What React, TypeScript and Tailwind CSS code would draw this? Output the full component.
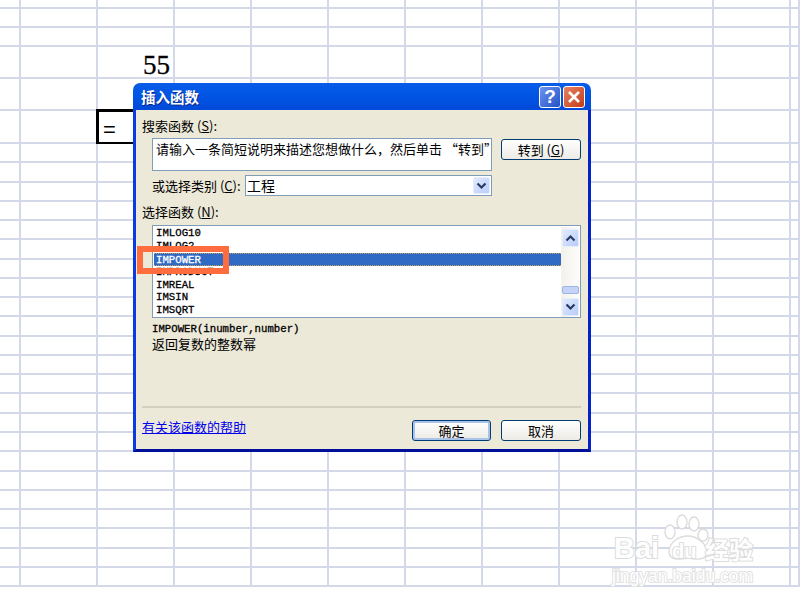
import React from "react";

const sans = "font-['Noto_Sans_CJK_SC','Liberation_Sans',sans-serif]";
const mono = "font-['Liberation_Mono','Noto_Sans_CJK_SC',monospace]";

function Sheet() {
  const rows = Array.from({ length: 29 });
  const cols = Array.from({ length: 12 });
  return (
    <div className="grid h-[600px] w-[800px] grid-cols-[21px_repeat(10,77.05px)_1fr] grid-rows-[9px_19px_19px_32px_32px_33px_repeat(23,19.27px)] overflow-hidden bg-white">
      {rows.map((_, r) =>
        cols.map((_, c) => {
          if (r === 3 && c === 2) {
            return (
              <div key={c} className="flex items-end justify-end border-r-2 border-b-2 border-[#d3d9e8] pr-[3px] font-['Liberation_Serif',serif] text-[27px] leading-[24px] text-black [-webkit-text-stroke:0.3px_#000]">
                55
              </div>
            );
          }
          if (r === 5 && c === 2) {
            return (
              <div key={c} className="-mt-[2px] -ml-[2px] flex items-center border-[3px] border-b-2 border-black pt-[6px] pl-[4px] font-['Liberation_Sans',sans-serif] text-[22px] leading-none text-black">
                =
              </div>
            );
          }
          return <div key={c} className="border-r-2 border-b-2 border-[#d3d9e8]" />;
        })
      )}
    </div>
  );
}

function Chevron({ up }: { up?: boolean }) {
  return (
    <svg width="11" height="8" viewBox="0 0 11 8" className={up ? "rotate-180" : ""}>
      <path d="M1.5 1.5 L5.5 5.5 L9.5 1.5" fill="none" stroke="#2a3a66" strokeWidth="2.2" />
    </svg>
  );
}

function ScrollBtn({ up, h = "h-[18px]" }: { up?: boolean; h?: string }) {
  return (
    <div className={`flex ${h} w-[17px] items-center justify-center rounded-[2px] border border-[#e6eefc] bg-gradient-to-br from-[#e1eafe] to-[#b9cdf9]`}>
      <Chevron up={up} />
    </div>
  );
}

function XpButton({ children, def, w = "w-[80px]" }: { children: React.ReactNode; def?: boolean; w?: string }) {
  return (
    <div
      className={`flex h-[21px] ${w} items-center justify-center rounded-[3px] border border-[#003c74] bg-gradient-to-b from-white to-[#ecebe5] text-[13px] leading-none text-black ${
        def ? "shadow-[inset_0_0_0_2px_#a9c3ea]" : ""
      }`}
    >
      {children}
    </div>
  );
}

function Dialog() {
  const items = ["IMLOG10", "IMLOG2", "IMPOWER", "IMPRODUCT", "IMREAL", "IMSIN", "IMSQRT"];
  const lightBold = "[-webkit-text-stroke:0.3px_currentColor]";
  return (
    <div className={`absolute top-[83px] left-[133px] flex h-[369px] w-[458px] flex-col ${sans}`}>
      <div className="flex h-[27px] shrink-0 items-center justify-between rounded-t-[7px] bg-gradient-to-b from-[#0a5ce8] via-[#0054e3] to-[#0349d8] pr-[6px] pl-[8px]">
        <span className="pt-px text-[14.5px] leading-none font-bold text-white [text-shadow:1px_1px_#0a2a8a]">插入函数</span>
        <div className="flex gap-[2px]">
          <div className="flex h-[22px] w-[22px] items-center justify-center rounded-[3px] border border-white bg-gradient-to-br from-[#6f95ef] to-[#2450c8] font-['Liberation_Sans',sans-serif] text-[19px] leading-none font-bold text-white">
            ?
          </div>
          <div className="flex h-[22px] w-[22px] items-center justify-center rounded-[3px] border border-white bg-gradient-to-br from-[#e8815f] to-[#c23a14]">
            <svg width="14" height="14" viewBox="0 0 14 14">
              <path d="M2 2 L12 12 M12 2 L2 12" stroke="#fff" strokeWidth="2.6" />
            </svg>
          </div>
        </div>
      </div>
      <div className="flex min-h-0 flex-1 flex-col border-x-[3px] border-b-[3px] border-r-[#0322c8] border-b-[#00109a] border-l-[#0a3be0] bg-[#ece9d8] pt-[8px] pr-[7px] pb-[8px] pl-[6px] text-[13px] leading-[16px] text-black">
        <div>
          搜索函数 (<span className="underline">S</span>):
        </div>
        <div className="mt-[4px] ml-[10px] flex items-start gap-[9px]">
          <div className="h-[33px] w-[340px] border border-[#7f9db9] bg-white pt-[2px] pl-[3px] text-[13px] leading-[16px] whitespace-nowrap">
            请输入一条简短说明来描述您想做什么，然后单击 “转到”
          </div>
          <div className="mt-px">
            <XpButton>
              转到 (<span className="underline">G</span>)
            </XpButton>
          </div>
        </div>
        <div className="mt-[4px] ml-[10px] flex h-[21px] items-center">
          <div className="w-[93px] whitespace-nowrap">
            或选择类别 (<span className="underline">C</span>):
          </div>
          <div className="flex h-[21px] w-[247px] items-center justify-between border border-[#7f9db9] bg-white pr-px pl-px">
            <span className="-mt-[2px] text-[14px]">工程</span>
            <ScrollBtn h="h-[17px]" />
          </div>
        </div>
        <div className="mt-[8px]">
          选择函数 (<span className="underline">N</span>):
        </div>
        <div className="mt-[5px] ml-[10px] flex h-[93px] w-[429px] border border-[#7f9db9] bg-white pt-px pl-px">
          <div className={`w-[408px] ${mono} ${lightBold} text-[10.7px] text-black`}>
            {items.map((t) => (
              <div
                key={t}
                className={`h-[12.9px] pl-[2px] leading-[12.9px] ${
                  t === "IMPOWER" ? "border-y border-dotted border-[#c9a05a] bg-[#316ac5] leading-[11px] text-white" : ""
                }`}
              >
                {t}
              </div>
            ))}
          </div>
          <div className="flex w-[19px] flex-col items-center bg-gradient-to-r from-[#f3f1ec] to-[#fdfdfa] pt-[2px] pb-[1px]">
            <ScrollBtn up />
            <div className="mt-[39px] h-[8px] w-[17px] rounded-[2px] border border-[#9fb4e6] bg-[#c4d4f8]" />
            <div className="mt-auto">
              <ScrollBtn />
            </div>
          </div>
        </div>
        <div className={`mt-[4px] ml-[10px] ${mono} ${lightBold} text-[10.7px] leading-[14px]`}>IMPOWER(inumber,number)</div>
        <div className="ml-[10px]">返回复数的整数幂</div>
        <div className="mt-auto h-[2px] bg-[#d4d0bf]" />
        <div className="mt-[12px] flex items-start">
          <span className="mr-auto -mt-[1px] text-[#0000ee] underline">有关该函数的帮助</span>
          <XpButton def w="w-[79px]">确定</XpButton>
          <div className="ml-[10px]">
            <XpButton>取消</XpButton>
          </div>
        </div>
      </div>
    </div>
  );
}

function Watermark() {
  const stroke = "[-webkit-text-stroke:2px_#dcdcdc] [paint-order:stroke_fill] text-white";
  return (
    <div className="pointer-events-none absolute top-[514px] left-[612px] h-[72px] w-[146px] font-['Liberation_Sans',sans-serif]">
      <svg width="50" height="46" viewBox="0 0 50 46" className="absolute top-0 left-[51px]">
        <g fill="#fff" stroke="#dcdcdc" strokeWidth="1.4">
          <ellipse cx="7" cy="18" rx="5" ry="7" />
          <ellipse cx="19" cy="8" rx="5" ry="7" />
          <ellipse cx="31" cy="10" rx="5" ry="7" />
          <ellipse cx="40" cy="21" rx="5" ry="6" />
          <path d="M6 38 C6 28 16 22 25 22 C34 22 44 30 44 38 C44 46 34 46 25 44 C16 46 6 46 6 38Z" />
        </g>
      </svg>
      <span className={`absolute top-[19px] left-[2px] text-[29px] leading-[30px] font-bold ${stroke}`}>Bai</span>
      <span className={`absolute top-[25px] left-[60px] text-[20px] leading-[24px] font-bold ${stroke}`}>du</span>
      <span className={`absolute top-[21px] left-[93px] ${sans} text-[24px] leading-[28px] font-bold whitespace-nowrap ${stroke}`}>经验</span>
      <span className="absolute top-[52px] left-0 text-[17.5px] leading-[20px] whitespace-nowrap text-white [paint-order:stroke_fill] [-webkit-text-stroke:2px_#e2e2e2]">jingyan.baidu.com</span>
    </div>
  );
}

export default function App() {
  return (
    <div className="relative h-[600px] w-[800px] overflow-hidden">
      <Sheet />
      <Dialog />
      <div className="absolute top-[246px] left-[137px] h-[28px] w-[92px] border-[6px] border-[#ff6d3f]" />
      <Watermark />
    </div>
  );
}
